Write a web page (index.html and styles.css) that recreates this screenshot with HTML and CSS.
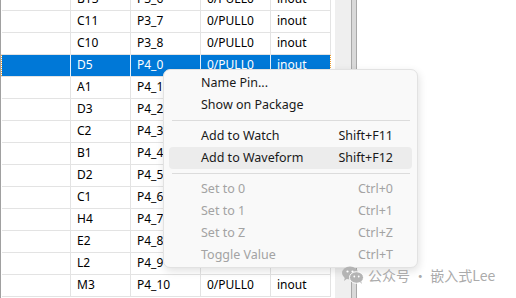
FILE: index.html
```html
<!DOCTYPE html>
<html lang="en">
<head>
  <meta charset="UTF-8">
  <title>Pins</title>
  <link rel="stylesheet" href="styles.css">
</head>
<body>
  <div class="screen">
    <div class="table-wrap">
      <table class="pins">
        <tbody id="rows"></tbody>
      </table>
    </div>
    <div class="gap"></div>
    <div class="track"></div>
    <div class="splitter"></div>
    <div class="blank"></div>

    <div class="menu">
      <div class="item">Name Pin...</div>
      <div class="item">Show on Package</div>
      <div class="sep"></div>
      <div class="item"><span>Add to Watch</span><span class="key">Shift+F11</span></div>
      <div class="item hover"><span>Add to Waveform</span><span class="key">Shift+F12</span></div>
      <div class="sep"></div>
      <div class="item off"><span>Set to 0</span><span class="key">Ctrl+0</span></div>
      <div class="item off"><span>Set to 1</span><span class="key">Ctrl+1</span></div>
      <div class="item off"><span>Set to Z</span><span class="key">Ctrl+Z</span></div>
      <div class="item off"><span>Toggle Value</span><span class="key">Ctrl+T</span></div>
    </div>

    <div class="mark">
      <svg width="22" height="18" viewBox="0 0 22 18">
        <ellipse cx="8" cy="7" rx="8" ry="6.5" fill="#b4b4b4"/>
        <path d="M3 11 L2 15 L6 12 Z" fill="#b4b4b4"/>
        <ellipse cx="14.5" cy="11.5" rx="7" ry="5.8" fill="#b4b4b4" stroke="#fff" stroke-width="1"/>
        <path d="M18 16 L20 18 L19 15 Z" fill="#b4b4b4"/>
        <circle cx="5.5" cy="5.5" r="1.1" fill="#fff"/>
        <circle cx="10.5" cy="5.5" r="1.1" fill="#fff"/>
        <circle cx="12.3" cy="10.5" r="0.9" fill="#fff"/>
        <circle cx="16.7" cy="10.5" r="0.9" fill="#fff"/>
      </svg>
      <span>公众号 · 嵌入式Lee</span>
    </div>
  </div>

  <script>
    const pins = [
      ['B13', 'P3_6'], ['C11', 'P3_7'], ['C10', 'P3_8'], ['D5', 'P4_0'],
      ['A1', 'P4_1'], ['D3', 'P4_2'], ['C2', 'P4_3'], ['B1', 'P4_4'],
      ['D2', 'P4_5'], ['C1', 'P4_6'], ['H4', 'P4_7'], ['E2', 'P4_8'],
      ['L2', 'P4_9'], ['M3', 'P4_10']
    ];
    const rows = document.getElementById('rows');
    pins.forEach(([ball, name]) => {
      const tr = document.createElement('tr');
      if (ball === 'D5') tr.className = 'selected';
      tr.innerHTML = `<td></td><td>${ball}</td><td>${name}</td><td>0/PULL0</td><td>inout</td>`;
      rows.appendChild(tr);
    });
  </script>
</body>
</html>
```

FILE: styles.css
```css
* {
  margin: 0;
  padding: 0;
  box-sizing: border-box;
}
body {
  width: 516px;
  height: 298px;
  overflow: hidden;
  background: #fff;
  font-family: 'Noto Sans', 'Liberation Sans', sans-serif;
  font-size: 12px;
}
.screen {
  position: relative;
  display: flex;
  height: 298px;
}
.table-wrap {
  width: 331px;
  height: 298px;
  overflow: hidden;
  border-left: 1px solid #a0a0a0;
}
.pins {
  border-collapse: collapse;
  table-layout: fixed;
  margin-top: -12px;
  color: #000;
}
.pins td {
  height: 22px;
  border: 1px solid #e3e3e3;
  border-left: none;
  padding: 0 0 1px 6px;
  white-space: nowrap;
  overflow: hidden;
  line-height: 20px;
}
.pins td:nth-child(1) { width: 69px; }
.pins td:nth-child(2) { width: 60px; }
.pins td:nth-child(3) { width: 70px; }
.pins td:nth-child(4) { width: 70px; }
.pins td:nth-child(5) { width: 60px; }
.pins tr.selected td {
  background: #0078d7;
  color: #fff;
  border-top: 1px dotted #f0a030;
  border-bottom: 1px dotted #f0a030;
  border-right-color: #e8f0f8;
}
.pins tr.selected td:first-child {
  border-left: 1px dotted #f0a030;
}
.pins tr.selected td:last-child {
  border-right: 1px dotted #f0a030;
}
.gap {
  width: 4px;
}
.track {
  width: 16px;
  background: #efefef;
}
.splitter {
  width: 6px;
  background: #d9d9d9;
  border-left: 1px solid #a8a8a8;
  border-right: 1px solid #a8a8a8;
}
.blank {
  flex: 1;
}

.menu {
  position: absolute;
  left: 163px;
  top: 69px;
  width: 255px;
  height: 199px;
  padding: 2px 5px 1px 5px;
  background: #f9f9f9;
  border: 1px solid #e2e2e2;
  border-radius: 7px;
  box-shadow: 1px 3px 8px rgba(0, 0, 0, 0.12);
  color: #1a1a1a;
  font-size: 12.5px;
}
.item {
  display: flex;
  justify-content: space-between;
  align-items: center;
  height: 22px;
  padding: 0 19px 1px 32px;
  border-radius: 4px;
  white-space: nowrap;
}
.item.hover {
  background: #ececec;
}
.item.off {
  color: #a3a3a3;
}
.key {
  text-align: right;
}
.sep {
  height: 1px;
  margin: 4px 2px 4px 3px;
  background: #dcdcdc;
}

.mark {
  position: absolute;
  left: 342px;
  top: 265px;
  display: flex;
  align-items: center;
  gap: 4px;
  color: #ababab;
  font-family: 'Noto Sans CJK SC', sans-serif;
  font-size: 14px;
}
```
